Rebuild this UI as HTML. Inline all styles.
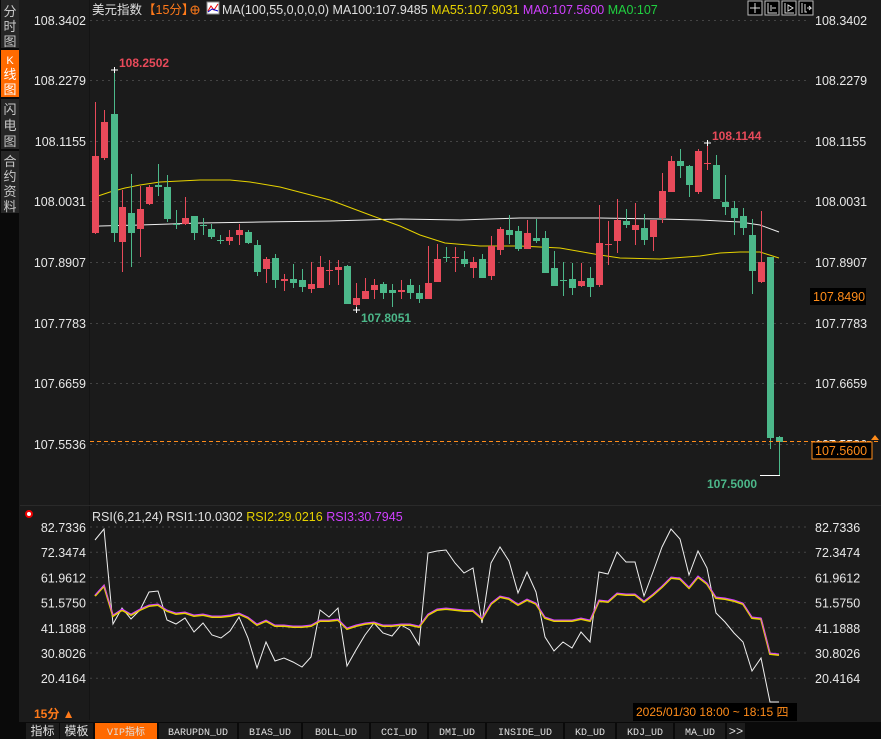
<!DOCTYPE html>
<html><head><meta charset="utf-8"><style>
html,body{margin:0;padding:0;background:#1b1b1b;width:881px;height:739px;overflow:hidden;font-family:"Liberation Sans","Noto Sans CJK SC",sans-serif}
</style></head><body>
<svg id="s" width="881" height="739" xmlns="http://www.w3.org/2000/svg" style="position:absolute;left:0;top:0" font-family="Liberation Sans, Noto Sans CJK SC, sans-serif">
<rect width="881" height="739" fill="#1b1b1b"/>
<rect x="0" y="0" width="19" height="739" fill="#0a0a0a"/>
<rect x="1" y="0" width="18" height="48" fill="#262626"/>
<rect x="1" y="50" width="18" height="47" fill="#ff6a00"/>
<rect x="1" y="99" width="18" height="50" fill="#262626"/>
<rect x="1" y="151" width="18" height="62" fill="#262626"/>
<g fill="#c8c8c8" font-size="13" text-anchor="middle">
<text x="10" y="16">分</text><text x="10" y="31">时</text><text x="10" y="46">图</text>
<text x="10" y="64" fill="#fff" font-size="11">K</text><text x="10" y="79" fill="#fff">线</text><text x="10" y="94" fill="#fff">图</text>
<text x="10" y="114">闪</text><text x="10" y="130">电</text><text x="10" y="146">图</text>
<text x="10" y="166">合</text><text x="10" y="181">约</text><text x="10" y="196">资</text><text x="10" y="211">料</text>
</g>
<line x1="89.5" y1="0" x2="89.5" y2="720" stroke="#141414"/>
<line x1="20" y1="505.5" x2="881" y2="505.5" stroke="#2a2a2a"/>
<g id="grid" stroke="#444" stroke-dasharray="2,4"></g>
<g id="lbl" font-size="12.5" fill="#e8e8e8"></g>
<text x="92" y="14" font-size="12.5" fill="#e0e0e0">美元指数</text>
<text x="143" y="14" font-size="12.5" fill="#ff7a1a">【15分】</text>
<circle cx="195" cy="10" r="4" fill="none" stroke="#ff7a1a"/><line x1="191" y1="10" x2="199" y2="10" stroke="#ff7a1a"/><line x1="195" y1="6" x2="195" y2="14" stroke="#ff7a1a"/>
<rect x="207" y="2" width="12" height="12" fill="#fff" stroke="#888"/><polyline points="208,11 211,6 214,10 218,4" fill="none" stroke="#e00"/><polyline points="208,12 212,9 218,11" fill="none" stroke="#00c"/>
<text x="222" y="14" font-size="12.5" fill="#e0e0e0">MA(100,55,0,0,0,0) MA100:107.9485 <tspan fill="#e6d200">MA55:107.9031</tspan> <tspan fill="#d040ff">MA0:107.5600</tspan> <tspan fill="#20d040">MA0:107</tspan></text>
<g stroke="#bbb" fill="#000">
<rect x="748" y="1" width="14" height="14"/><rect x="765" y="1" width="14" height="14"/><rect x="782" y="1" width="14" height="14"/><rect x="799" y="1" width="14" height="14"/>
</g>
<g stroke="#ddd" fill="none"><path d="M755 3v10M750 8h10"/><path d="M768 3v10h9M771 5v6M772 8h4"/><path d="M785 3v10h9M788 5v6l5-3z"/><path d="M802 3v10M805 4v8h2M807 8h4l-2-2M809 10l2-2"/></g>
<g id="ma"></g>
<g id="c"></g>
<text x="119" y="67" font-size="12" font-weight="bold" fill="#e84a5a">108.2502</text>
<text x="712" y="140" font-size="12" font-weight="bold" fill="#e84a5a">108.1144</text>
<text x="361" y="322" font-size="12" font-weight="bold" fill="#4cb88a">107.8051</text>
<text x="707" y="488" font-size="12" font-weight="bold" fill="#4cb88a">107.5000</text>
<line x1="760" y1="475.5" x2="780" y2="475.5" stroke="#fff"/>
<line x1="90" y1="441.5" x2="881" y2="441.5" stroke="#ff8c1a" stroke-dasharray="4,3"/>
<rect x="810" y="288" width="56" height="17" fill="#000"/>
<text x="813" y="301" font-size="12.5" fill="#ff8c1a">107.8490</text>
<rect x="812" y="442" width="60" height="17" fill="#000" stroke="#ff8c1a"/>
<text x="815" y="455" font-size="12.5" fill="#ff8c1a">107.5600</text>
<path d="M871 440l4-5 4 5z" fill="#ff8c1a"/>
<circle cx="29" cy="514" r="3" fill="#fff" stroke="#e00" stroke-width="2"/>
<text x="92" y="521" font-size="12.5" fill="#e0e0e0">RSI(6,21,24) RSI1:10.0302 <tspan fill="#e6d200">RSI2:29.0216</tspan> <tspan fill="#d040ff">RSI3:30.7945</tspan></text>
<g id="rsi" fill="none"></g>
<text x="34" y="718" font-size="12" font-weight="bold" fill="#ff7a1a">15分 ▲</text>
<rect x="633" y="703" width="164" height="18" fill="#000"/>
<text x="636" y="716" font-size="12" fill="#ff8c1a">2025/01/30 18:00 ~ 18:15 四</text>
<rect x="0" y="722" width="881" height="17" fill="#0a0a0a"/>
<g id="tabs" font-size="11.5" font-family="Liberation Mono, Noto Sans CJK SC, monospace"></g>
</svg>
<script>
var NS="http://www.w3.org/2000/svg";
function el(p,t,a,txt){var e=document.createElementNS(NS,t);for(var k in a)e.setAttribute(k,a[k]);if(txt)e.textContent=txt;document.getElementById(p).appendChild(e);return e;}
var L=["108.3402","108.2279","108.1155","108.0031","107.8907","107.7783","107.6659","107.5536"];
var Y=[20,80,141,201,262,323,383,444];
L.forEach(function(t,i){el("grid","line",{x1:90,x2:810,y1:Y[i]+.5,y2:Y[i]+.5});el("lbl","text",{x:86,y:Y[i]+5,"text-anchor":"end"},t);if(i<7)el("lbl","text",{x:815,y:Y[i]+5},t);});
var R=["82.7336","72.3474","61.9612","51.5750","41.1888","30.8026","20.4164"];
R.forEach(function(t,i){var y=527+i*25.2;el("grid","line",{x1:90,x2:810,y1:y,y2:y});el("lbl","text",{x:86,y:y+5,"text-anchor":"end"},t);el("lbl","text",{x:815,y:y+5},t);});
el("lbl","text",{x:815,y:449},"107.5536");
var C=[[95,156,233,102,234,1],[104,122,158,110,160,1],[114,114,233,70,242,0],[122,207,242,190,272,1],[131,213,233,174,267,0],[140,209,229,186,257,1],[149,187,204,185,205,1],[158,185,187,164,196,0],[167,187,219,175,222,0],[176,224,225,210,229,0],[185,218,224,197,225,1],[194,216,233,216,240,0],[203,225,225,218,235,0],[211,229,237,224,239,0],[220,240,240,235,244,0],[229,237,241,230,245,1],[239,230,235,224,245,1],[248,232,243,230,244,0],[257,245,272,240,276,0],[266,259,269,257,283,1],[275,258,280,254,288,0],[284,279,281,274,291,1],[293,279,283,264,288,0],[302,280,287,269,292,0],[311,284,289,262,293,1],[320,267,288,256,288,1],[329,270,270,260,285,1],[338,267,270,260,285,1],[347,266,304,265,304,0],[356,298,305,283,310,1],[365,291,299,278,299,1],[374,285,290,279,299,1],[383,284,293,282,299,0],[392,290,293,284,307,0],[401,290,292,280,299,1],[410,285,293,279,299,0],[419,293,299,285,303,0],[428,283,299,246,299,1],[437,259,282,244,282,1],[446,257,257,247,262,0],[455,257,257,247,272,1],[464,259,264,251,267,0],[473,262,268,257,278,1],[482,259,278,254,278,0],[491,246,276,236,280,1],[500,229,250,227,255,1],[509,230,235,215,244,0],[518,231,249,226,251,0],[527,233,249,220,249,1],[536,238,241,219,243,0],[545,238,273,231,273,0],[554,268,286,251,286,0],[563,280,281,262,296,0],[572,279,288,263,295,0],[581,281,286,263,287,1],[590,278,287,267,297,0],[599,243,285,205,287,1],[608,244,245,221,265,1],[617,220,241,199,253,1],[626,221,225,209,228,0],[635,225,230,203,245,1],[644,228,240,214,245,0],[653,220,237,220,251,1],[662,191,218,173,223,1],[671,161,192,156,192,1],[680,161,166,149,178,0],[689,166,185,165,197,0],[698,151,192,149,194,1],[707,163,163,143,170,1],[716,165,199,155,199,0],[725,202,207,175,215,0],[734,208,218,201,235,0],[743,216,228,208,235,0],[752,235,271,219,294,0],[761,262,282,211,283,1],[770,257,438,257,449,0],[779,437,442,436,475,0]];
C.forEach(function(c){var col=c[5]?"#e84a5a":"#4cb88a";el("c","line",{x1:c[0]+.5,x2:c[0]+.5,y1:c[3],y2:c[4],stroke:col});var h=Math.max(1,c[2]-c[1]);el("c","rect",{x:c[0]-3,y:c[1],width:7,height:h,fill:col});});
el("c","path",{d:"M111 70h7M114.5 67v6M353 310h7M356.5 307v6M704 143h7M707.5 140v6",stroke:"#fff"});
el("ma","polyline",{points:"92,227 100,226 140,225 200,223 260,222 330,221 400,219 460,220 520,218 600,218 660,219 700,220 740,222 760,225 779,232",fill:"none",stroke:"#eee"});
el("ma","polyline",{points:"95,197 110,192 125,188 140,185 160,182 200,180 230,180 250,182 280,187 330,200 370,215 400,226 420,235 445,243 480,246 520,246 560,248 600,255 620,258 660,259 700,256 720,253 740,252 760,252 779,258",fill:"none",stroke:"#e6d200"});
var W=[[95,540],[104,529],[113,624],[122,608],[131,619],[140,610],[149,592],[158,591],[167,620],[176,624],[185,618],[194,632],[203,623],[212,635],[221,638],[230,631],[239,617],[248,638],[257,668],[266,642],[275,661],[284,658],[293,662],[302,667],[311,657],[320,610],[329,617],[338,608],[347,666],[356,650],[365,635],[374,623],[383,633],[392,636],[401,625],[410,630],[419,645],[428,553],[437,551],[446,550],[455,563],[464,573],[473,568],[482,623],[491,563],[500,547],[509,561],[518,593],[527,572],[536,592],[545,637],[554,651],[563,642],[572,648],[581,632],[590,642],[599,572],[608,574],[617,552],[626,562],[635,562],[644,596],[653,572],[662,547],[671,529],[680,539],[689,575],[698,551],[707,568],[716,613],[725,622],[734,633],[743,642],[752,671],[761,658],[770,702],[779,702]];
var M=[[95,595],[104,585],[113,615],[122,609],[131,614],[140,609],[149,605],[158,604],[167,610],[176,613],[185,612],[194,615],[203,614],[212,616],[221,616],[230,615],[239,613],[248,617],[257,624],[266,620],[275,625],[284,625],[293,626],[302,626],[311,625],[320,620],[329,620],[338,619],[347,628],[356,625],[365,623],[374,622],[383,625],[392,625],[401,624],[410,624],[419,626],[428,614],[437,609],[446,608],[455,609],[464,610],[473,610],[482,618],[491,603],[500,596],[509,598],[518,604],[527,599],[536,603],[545,617],[554,620],[563,620],[572,620],[581,618],[590,620],[599,600],[608,601],[617,593],[626,594],[635,594],[644,601],[653,594],[662,586],[671,577],[680,578],[689,587],[698,576],[707,583],[716,597],[725,598],[734,600],[743,603],[752,617],[761,618],[770,653],[779,654]];
function pts(a,d){return a.map(function(p){return p[0]+","+(p[1]+d)}).join(" ");}
el("rsi","polyline",{points:pts(W,0),stroke:"#f0f0f0"});
el("rsi","polyline",{points:pts(M,1),stroke:"#e6d200","stroke-width":2});
el("rsi","polyline",{points:pts(M,0),stroke:"#d040ff"});
var tabs=[["指标",26,33],["模板",60,33],["VIP指标",95,62],["BARUPDN_UD",159,78],["BIAS_UD",239,62],["BOLL_UD",303,66],["CCI_UD",371,56],["DMI_UD",429,56],["INSIDE_UD",487,76],["KD_UD",565,50],["KDJ_UD",617,56],["MA_UD",675,50],["»",727,18]];
tabs.forEach(function(t){el("tabs","rect",{x:t[1],y:723,width:t[2],height:16,fill:t[0]=="VIP指标"?"#ff6a00":"#1c1c1c"});el("tabs","text",{x:t[1]+t[2]/2,y:735,"text-anchor":"middle",fill:"#e0e0e0","font-size":(t[0].length>2&&/[A-Z]/.test(t[0])?10:12)},t[0]=="»"?">>":t[0]);});
</script>
</body></html>
